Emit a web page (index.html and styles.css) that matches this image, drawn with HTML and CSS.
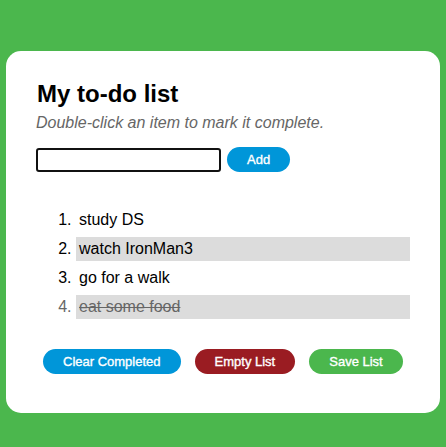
FILE: index.html
```html
<!DOCTYPE html>
<html>
<head>
<meta charset="utf-8">
<link rel="stylesheet" href="styles.css">
</head>
<body>
<div class="card">
  <h1 class="title">My to-do list</h1>
  <p class="subtitle">Double-click an item to mark it complete.</p>
  <div class="add-row">
    <input class="new-item" type="text">
    <button class="btn btn-blue">Add</button>
  </div>
  <ol class="todo">
    <li class="item">study DS</li>
    <li class="item alt">watch IronMan3</li>
    <li class="item">go for a walk</li>
    <li class="item alt done">eat some food</li>
  </ol>
  <div class="actions">
    <button class="btn btn-blue">Clear Completed</button>
    <button class="btn btn-red">Empty List</button>
    <button class="btn btn-green">Save List</button>
  </div>
</div>
</body>
</html>
```
FILE: styles.css
```css
html, body {
  margin: 0;
  padding: 0;
}
body {
  background: #4bb74d;
  font-family: "Liberation Sans", Arial, sans-serif;
  padding: 51px 6px 34px;
}
.card {
  background: #fff;
  border-radius: 15px;
  padding: 29px 30px 39px;
}
.title {
  margin: 0 0 6px 1px;
  font-size: 24px;
  font-weight: bold;
  line-height: 27.6px;
  color: #000;
}
.subtitle {
  margin: 0;
  font-size: 16px;
  font-style: italic;
  color: #666;
  line-height: 18.4px;
}
.add-row {
  display: flex;
  align-items: center;
  gap: 6px;
  margin-top: 15px;
}
.new-item {
  box-sizing: border-box;
  width: 185px;
  height: 24px;
  border: 2px solid #111;
  border-radius: 3px;
  margin: 0;
  padding: 0 4px;
}
.btn {
  font-family: "Liberation Sans", Arial, sans-serif;
  font-size: 13px;
  font-weight: normal;
  -webkit-text-stroke: 0.35px #fff;
  color: #fff;
  border: none;
  border-radius: 13px;
  height: 25px;
  padding: 0 20px;
  margin: 0;
}
.btn-blue { background: #0096d9; }
.btn-red { background: #9a1c22; }
.btn-green { background: #4bb74d; }
.todo {
  margin: 36px 0 0;
  padding-left: 40px;
  display: flex;
  flex-direction: column;
  gap: 5px;
  font-size: 16px;
}
.item {
  height: 24px;
  line-height: 24px;
  padding-left: 3px;
  color: #000;
}
.item.alt {
  background: #dcdcdc;
}
.item.done {
  color: #666;
  text-decoration: line-through;
}
.actions {
  display: flex;
  gap: 14px;
  padding-left: 7px;
  margin-top: 30px;
}
```
